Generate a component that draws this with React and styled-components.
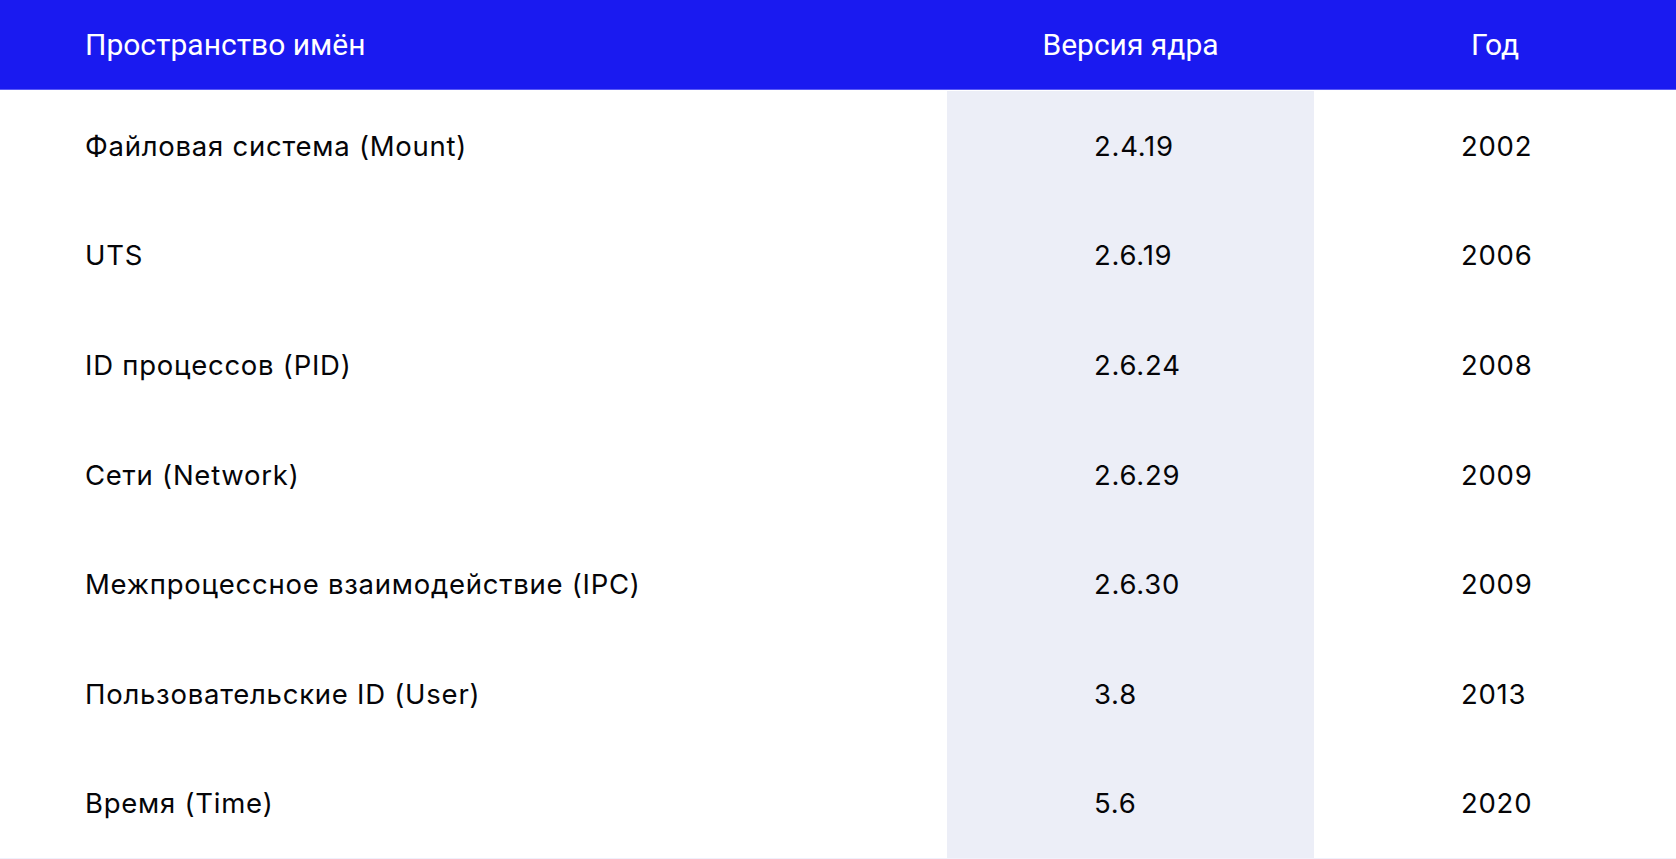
import React from "react";
import styled, { createGlobalStyle } from "styled-components";

const Global = createGlobalStyle`
  html, body { margin: 0; padding: 0; background: #ffffff; }
  body { font-family: Inter, "Noto Sans", sans-serif; -webkit-font-smoothing: antialiased; }
`;

const Table = styled.div`
  width: 1676px;
  display: grid;
  grid-template-columns: 947px 367px 1fr;
  border-bottom: 1px solid #f0f0fb;
`;

const HeadCell = styled.div`
  height: 89px;
  background: #1a1af0;
  border-bottom: 1px solid #5a5af7;
  color: #ffffff;
  font-family: Roboto, "Liberation Sans", sans-serif;
  font-size: 30px;
  display: flex;
  align-items: center;
  justify-content: ${(p) => (p.$center ? "center" : "flex-start")};
  padding-left: ${(p) => (p.$center ? "0" : "85px")};
  margin-bottom: 1px;
`;

const Cell = styled.div`
  height: 109.6px;
  display: flex;
  align-items: center;
  padding-left: ${(p) => p.$pad}px;
  background: ${(p) => (p.$shade ? "#eceef7" : "#ffffff")};
  color: #050508;
  font-family: Inter, "Noto Sans", sans-serif;
  font-size: 27.5px;
  letter-spacing: 0.75px;
  box-sizing: border-box;
`;

const rows = [
  ["Файловая система (Mount)", "2.4.19", "2002"],
  ["UTS", "2.6.19", "2006"],
  ["ID процессов (PID)", "2.6.24", "2008"],
  ["Сети (Network)", "2.6.29", "2009"],
  ["Межпроцессное взаимодействие (IPC)", "2.6.30", "2009"],
  ["Пользовательские ID (User)", "3.8", "2013"],
  ["Время (Time)", "5.6", "2020"],
];

export default function App() {
  return (
    <>
      <Global />
      <Table>
        <HeadCell>Пространство имён</HeadCell>
        <HeadCell $center>Версия ядра</HeadCell>
        <HeadCell $center>Год</HeadCell>
        {rows.map(([name, ver, year]) => (
          <React.Fragment key={name}>
            <Cell $pad={85}>{name}</Cell>
            <Cell $pad={147} $shade>{ver}</Cell>
            <Cell $pad={147}>{year}</Cell>
          </React.Fragment>
        ))}
      </Table>
    </>
  );
}
